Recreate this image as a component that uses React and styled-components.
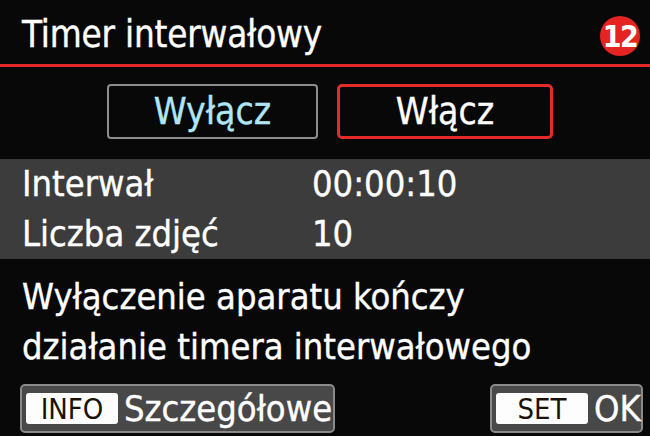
import React from "react";
import styled, { createGlobalStyle } from "styled-components";

const GlobalStyle = createGlobalStyle`
  html, body {
    margin: 0;
    padding: 0;
    background: #080808;
  }
  * {
    box-sizing: border-box;
  }
`;

const FONT = `"DejaVu Sans Condensed", "DejaVu Sans", sans-serif`;

const Screen = styled.div`
  width: 650px;
  height: 436px;
  background: #080808;
  color: #fff;
  font-family: ${FONT};
  font-stretch: condensed;
  -webkit-text-stroke: 0.35px currentColor;
  overflow: hidden;
`;

const Header = styled.header`
  display: flex;
  align-items: center;
  justify-content: space-between;
  height: 67px;
  padding: 0 10px 0 22px;
  border-bottom: 3px solid #e32626;
`;

const Title = styled.h1`
  margin: 0;
  padding-top: 4px;
  font-size: 36.5px;
  font-weight: normal;
  letter-spacing: -0.2px;
`;

const Badge = styled.span`
  display: flex;
  align-items: center;
  justify-content: center;
  width: 40px;
  height: 40px;
  margin-top: 8px;
  border-radius: 50%;
  background: #e42421;
  font-size: 30px;
  font-weight: bold;
  letter-spacing: -1.5px;
  -webkit-text-stroke: 0;
`;

const Toggle = styled.div`
  display: flex;
  gap: 19px;
  padding-left: 107px;
  margin-top: 17px;
`;

const Option = styled.div`
  display: flex;
  align-items: center;
  justify-content: center;
  width: ${(p) => p.$w}px;
  height: 55px;
  border: ${(p) => (p.$active ? "3px solid #e52a2a" : "2px solid #8d8d8d")};
  border-radius: ${(p) => (p.$active ? 5 : 4)}px;
  color: ${(p) => (p.$active ? "#ffffff" : "#aee6f6")};
  font-size: 37px;
`;

const Band = styled.div`
  margin-top: 20px;
  background: #3c3c3c;
`;

const Row = styled.div`
  display: grid;
  grid-template-columns: 290px auto;
  padding-left: 22px;
  height: 50px;
  line-height: 50px;
  font-size: 36px;
`;

const Note = styled.p`
  margin: 13px 0 0;
  padding-left: 22px;
  font-size: 36px;
  line-height: 50px;
`;

const Footer = styled.footer`
  display: flex;
  justify-content: space-between;
  padding: 0 7px 0 20px;
  margin-top: 12px;
`;

const Control = styled.div`
  display: flex;
  align-items: center;
  gap: 6px;
  width: ${(p) => p.$w}px;
  height: 49px;
  padding: 0 4px;
  background: #484848;
  border: 2px solid #8a8a8a;
  border-radius: 5px;
  font-size: 36px;
`;

const Key = styled.span`
  display: flex;
  align-items: center;
  justify-content: center;
  width: 92px;
  height: 31px;
  flex-shrink: 0;
  background: #fdfdfd;
  border-radius: 3px;
  color: #1a1208;
  font-size: 29px;
  -webkit-text-stroke: 0;
`;

export default function App() {
  return (
    <Screen>
      <GlobalStyle />
      <Header>
        <Title>Timer interwałowy</Title>
        <Badge>12</Badge>
      </Header>
      <Toggle>
        <Option $w={211}>Wyłącz</Option>
        <Option $w={216} $active>
          Włącz
        </Option>
      </Toggle>
      <Band>
        <Row>
          <span>Interwał</span>
          <span>00:00:10</span>
        </Row>
        <Row>
          <span>Liczba zdjęć</span>
          <span>10</span>
        </Row>
      </Band>
      <Note>
        Wyłączenie aparatu kończy
        <br />
        działanie timera interwałowego
      </Note>
      <Footer>
        <Control $w={315}>
          <Key>INFO</Key>
          Szczegółowe
        </Control>
        <Control $w={153}>
          <Key>SET</Key>
          OK
        </Control>
      </Footer>
    </Screen>
  );
}
